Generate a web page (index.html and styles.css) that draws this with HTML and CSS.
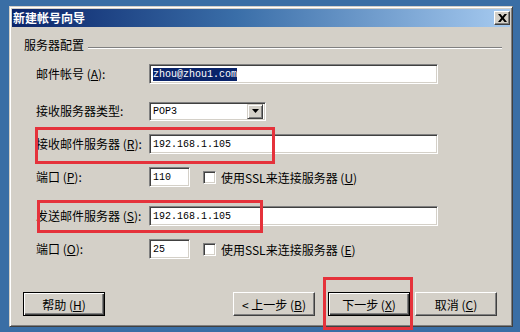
FILE: index.html
```html
<!DOCTYPE html>
<html>
<head>
<meta charset="utf-8">
<link rel="stylesheet" href="styles.css">
</head>
<body>
<div class="window">
  <div class="titlebar">
    <span class="title">新建帐号向导</span>
    <span class="close">
      <svg width="9" height="8" viewBox="0 0 9 8"><path d="M0 0h2.5l2 2.4 2-2.4H9L5.8 4 9 8H6.5l-2-2.4-2 2.4H0l3.2-4z" fill="#000"/></svg>
    </span>
  </div>
  <div class="content">
    <div class="group-head"><span class="group-title">服务器配置</span><span class="etch"></span></div>
    <div class="form">
      <div class="row r1">
        <span class="label">邮件帐号 (<u>A</u>):</span>
        <span class="field wide"><span class="sel">zhou@zhou1.com</span></span>
      </div>
      <div class="row r2">
        <span class="label">接收服务器类型:</span>
        <span class="field combo"><span class="val">POP3</span><span class="drop"><svg width="7" height="4" viewBox="0 0 7 4"><path d="M0 0h7L3.5 4z" fill="#000"/></svg></span></span>
      </div>
      <div class="row r3">
        <span class="label">接收邮件服务器 (<u>R</u>):</span>
        <span class="field wide"><span class="val">192.168.1.105</span></span>
      </div>
      <div class="row r4">
        <span class="label">端口 (<u>P</u>):</span>
        <span class="field port"><span class="val">110</span></span>
        <span class="check"></span>
        <span class="check-label">使用SSL来连接服务器 (<u>U</u>)</span>
      </div>
      <div class="row r5">
        <span class="label">发送邮件服务器 (<u>S</u>):</span>
        <span class="field wide"><span class="val">192.168.1.105</span></span>
      </div>
      <div class="row r6">
        <span class="label">端口 (<u>O</u>):</span>
        <span class="field port"><span class="val">25</span></span>
        <span class="check"></span>
        <span class="check-label">使用SSL来连接服务器 (<u>E</u>)</span>
      </div>
    </div>
    <div class="buttons">
      <span class="btn default">帮助 (<u>H</u>)</span>
      <span class="spacer"></span>
      <span class="btn">&lt; 上一步 (<u>B</u>)</span>
      <span class="btn default next">下一步 (<u>X</u>)</span>
      <span class="btn">取消 (<u>C</u>)</span>
    </div>
  </div>
</div>
<div class="mark m1"></div>
<div class="mark m2"></div>
<div class="mark m3"></div>
</body>
</html>
```

FILE: styles.css
```css
html, body {
  margin: 0;
  padding: 0;
}
body {
  position: relative;
  width: 520px;
  height: 332px;
  box-sizing: border-box;
  padding: 6px 7px 5px 9px;
  background: #3a6ea5;
  font-family: "Noto Sans CJK SC", "Noto Sans", sans-serif;
  font-size: 12px;
  color: #000;
  overflow: hidden;
}
u { text-decoration: underline; text-underline-offset: 1px; }
.window {
  width: 504px;
  height: 321px;
  box-sizing: border-box;
  background: #d4d0c8;
  border: 1px solid;
  border-color: #d4d0c8 #404040 #404040 #d4d0c8;
  box-shadow: inset 1px 1px #fff, inset -1px -1px #808080;
  padding: 2px;
  display: flex;
  flex-direction: column;
}
.titlebar {
  height: 18px;
  flex: none;
  display: flex;
  align-items: center;
  justify-content: space-between;
  padding-left: 1px;
  background: linear-gradient(to right, #0a246a 0%, #3a6ea8 45%, #a6caf0 100%);
}
.title {
  color: #fff;
  font-weight: bold;
  font-size: 12px;
  line-height: 18px;
  letter-spacing: 0;
}
.close {
  width: 16px;
  height: 14px;
  box-sizing: border-box;
  background: #d4d0c8;
  border: 1px solid;
  border-color: #fff #404040 #404040 #fff;
  box-shadow: inset -1px -1px #808080;
  display: flex;
  align-items: center;
  justify-content: center;
}
.content {
  flex: 1;
  display: flex;
  flex-direction: column;
}
.group-head {
  margin-top: 11px;
  height: 14px;
  padding-left: 12px;
  padding-right: 8px;
  display: flex;
}
.group-title {
  line-height: 14px;
  white-space: nowrap;
}
.etch {
  flex: 1;
  margin-left: 4px;
  margin-top: 9px;
  height: 0;
  border-top: 1px solid #808080;
  border-bottom: 1px solid #fff;
}
.form {
  margin-top: 12px;
  padding-left: 24px;
  display: flex;
  flex-direction: column;
}
.row {
  height: 20px;
  display: flex;
  align-items: center;
}
.r2 { margin-top: 17px; }
.r3 { margin-top: 13px; }
.r4 { margin-top: 13px; }
.r5 { margin-top: 19px; }
.r6 { margin-top: 13px; }
.label {
  width: 113px;
  flex: none;
  white-space: nowrap;
  line-height: 14px;
}
.field {
  height: 20px;
  box-sizing: border-box;
  background: #fff;
  border: 1px solid;
  border-color: #808080 #fff #fff #808080;
  box-shadow: inset 1px 1px #404040, inset -1px -1px #d4d0c8;
  display: flex;
  align-items: center;
  padding-left: 3px;
  font-family: "Liberation Mono", monospace;
  font-size: 10px;
  white-space: nowrap;
}
.wide { width: 289px; }
.port { width: 41px; }
.combo {
  width: 117px;
  height: 19px;
  padding-right: 2px;
}
.combo .val { flex: 1; }
.drop {
  width: 16px;
  height: 15px;
  box-sizing: border-box;
  background: #d4d0c8;
  border: 1px solid;
  border-color: #d4d0c8 #404040 #404040 #d4d0c8;
  box-shadow: inset 1px 1px #fff, inset -1px -1px #808080;
  display: flex;
  align-items: center;
  justify-content: center;
}
.sel {
  background: #0a246a;
  color: #fff;
  line-height: 13px;
}
.check {
  width: 13px;
  height: 13px;
  box-sizing: border-box;
  margin-left: 13px;
  background: #fff;
  border: 1px solid;
  border-color: #808080 #fff #fff #808080;
  box-shadow: inset 1px 1px #404040, inset -1px -1px #d4d0c8;
}
.check-label {
  margin-left: 5px;
  white-space: nowrap;
}
.buttons {
  margin-top: auto;
  margin-bottom: 8px;
  padding-left: 11px;
  padding-right: 13px;
  display: flex;
  align-items: center;
}
.spacer { flex: 1; }
.btn {
  width: 82px;
  height: 24px;
  box-sizing: border-box;
  background: #d4d0c8;
  border: 1px solid;
  border-color: #fff #404040 #404040 #fff;
  box-shadow: inset -1px -1px #808080;
  display: flex;
  align-items: center;
  justify-content: center;
  white-space: nowrap;
}
.btn.default {
  border-color: #000;
  box-shadow: inset 1px 1px #fff, inset -1px -1px #404040, inset -2px -2px #808080;
}
.next { margin-left: 13px; margin-right: 5px; }
.mark {
  position: absolute;
  border: 3px solid #e5323b;
  box-sizing: border-box;
}
.m1 { left: 35px; top: 127px; width: 240px; height: 37px; }
.m2 { left: 37px; top: 200px; width: 226px; height: 33px; }
.m3 { left: 323px; top: 277px; width: 90px; height: 53px; }
```
